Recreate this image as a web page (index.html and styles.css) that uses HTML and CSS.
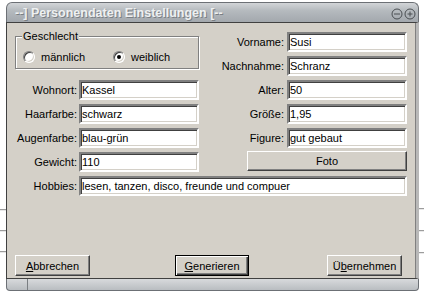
FILE: index.html
```html
<!DOCTYPE html>
<html>
	<head>
		<title>Personendaten Einstellungen</title>
		<link rel="stylesheet" href="styles.css">
	</head>
	<body>
		<div class="window">
			<div class="titlebar">
				<span class="title">--] Personendaten Einstellungen [--</span>
				<span class="tbtns">
					<svg width="12" height="12" viewBox="0 0 12 12"><circle cx="6" cy="6" r="5" fill="none" stroke="#4a4e52" stroke-width="1"/><path d="M3 6h6" stroke="#4a4e52" stroke-width="1"/></svg>
					<svg width="12" height="12" viewBox="0 0 12 12"><circle cx="6" cy="6" r="5" fill="none" stroke="#4a4e52" stroke-width="1"/><path d="M3.5 6h5M6 3.5v5" stroke="#4a4e52" stroke-width="1"/></svg>
				</span>
			</div>
			<div class="panel">
				<div class="form">
					<div class="group">
						<span class="legend">Geschlecht</span>
						<span class="radio"><span class="dot"></span>männlich</span>
						<span class="radio female"><span class="dot checked"></span>weiblich</span>
					</div>

					<span class="lbl right row1">Vorname:</span><span class="field right row1">Susi</span>
					<span class="lbl right row2">Nachnahme:</span><span class="field right row2">Schranz</span>

					<span class="lbl left row3">Wohnort:</span><span class="field left row3">Kassel</span>
					<span class="lbl right row3">Alter:</span><span class="field right row3">50</span>

					<span class="lbl left row4">Haarfarbe:</span><span class="field left row4">schwarz</span>
					<span class="lbl right row4">Größe:</span><span class="field right row4">1,95</span>

					<span class="lbl left row5">Augenfarbe:</span><span class="field left row5">blau-grün</span>
					<span class="lbl right row5">Figure:</span><span class="field right row5">gut gebaut</span>

					<span class="lbl left row6">Gewicht:</span><span class="field left row6">110</span>
					<button class="btn foto row6">Foto</button>

					<span class="lbl left row7">Hobbies:</span><span class="field wide row7">lesen, tanzen, disco, freunde und compuer</span>
				</div>
				<div class="buttons">
					<button class="btn action"><u>A</u>bbrechen</button>
					<button class="btn action default generate"><u>G</u>enerieren</button>
					<button class="btn action apply">Ü<u>b</u>ernehmen</button>
				</div>
			</div>
			<div class="statusbar"><span class="cell"></span></div>
		</div>
	</body>
</html>
```

FILE: styles.css
```css
:root {
	--face: #d4d0c8;
	--shadow: #808080;
	--dark: #404040;
}
* {font-family: "Liberation Sans", Arial, sans-serif; font-size: 11px; box-sizing: border-box;}
body {
	margin: 0;
	width: 424px;
	height: 294px;
	overflow: hidden;
	background:
		linear-gradient(#9c9c9c, #9c9c9c) 0 209px / 6px 1px no-repeat,
		linear-gradient(#e8e8e8, #e8e8e8) 0 210px / 6px 1px no-repeat,
		linear-gradient(#9c9c9c, #9c9c9c) 0 230px / 6px 1px no-repeat,
		linear-gradient(#e8e8e8, #e8e8e8) 0 231px / 6px 1px no-repeat,
		linear-gradient(#9c9c9c, #9c9c9c) 0 251px / 6px 1px no-repeat,
		linear-gradient(#e8e8e8, #e8e8e8) 0 252px / 6px 1px no-repeat,
		linear-gradient(#9c9c9c, #9c9c9c) 419px 208px / 5px 1px no-repeat,
		linear-gradient(#e8e8e8, #e8e8e8) 419px 209px / 5px 1px no-repeat,
		linear-gradient(#9c9c9c, #9c9c9c) 419px 230px / 5px 1px no-repeat,
		linear-gradient(#e8e8e8, #e8e8e8) 419px 231px / 5px 1px no-repeat,
		linear-gradient(#9c9c9c, #9c9c9c) 419px 252px / 5px 1px no-repeat,
		linear-gradient(#e8e8e8, #e8e8e8) 419px 253px / 5px 1px no-repeat,
		#fff;
}
.window {
	margin: 2px 0 0 6px;
	width: 413px;
	display: flex;
	flex-direction: column;
}
.titlebar {
	height: 20px;
	display: flex;
	align-items: center;
	justify-content: space-between;
	padding: 0 2px 0 8px;
	border: 1px solid #6c7075;
	border-bottom: none;
	border-radius: 6px 6px 0 0;
	background: linear-gradient(#d2d5d8, #b5babe 40%, #a3a8ad);
}
.title {
	font-size: 12.5px;
	font-weight: bold;
	color: #eef0f1;
	text-shadow: 1px 1px 0 #7a7f84;
}
.tbtns {display: flex; gap: 1px; padding-top: 2px;}

.panel {
	height: 257px;
	background: var(--face);
	border: 1px solid var(--dark);
	border-right: 3px solid #b8b8b8;
	box-shadow: inset -1px 0 var(--shadow);
	display: flex;
	flex-direction: column;
	justify-content: space-between;
}
.form {
	display: grid;
	grid-template-columns: 64px 120px 88px 120px;
	grid-template-rows: repeat(7, 20px);
	row-gap: 4px;
	padding: 9px 0 0 8px;
}
.row1 {grid-row: 1;}
.row2 {grid-row: 2;}
.row3 {grid-row: 3;}
.row4 {grid-row: 4;}
.row5 {grid-row: 5;}
.row6 {grid-row: 6;}
.row7 {grid-row: 7;}
.lbl {
	display: flex;
	align-items: center;
	justify-content: flex-end;
	color: #000;
	white-space: nowrap;
}
.lbl.left {grid-column: 1; padding-right: 2px;}
.lbl.right {grid-column: 3; padding-right: 3px;}
.field {
	display: flex;
	align-items: center;
	background: #fff;
	color: #000;
	padding-left: 1px;
	border: 2px solid;
	border-color: var(--shadow) #fff #fff var(--shadow);
	box-shadow: inset 1px 1px var(--dark), inset -1px -1px var(--face);
	white-space: nowrap;
}
.field.left {grid-column: 2;}
.field.right {grid-column: 4;}
.field.wide {grid-column: 2 / 5;}

.group {
	grid-column: 1 / 3;
	grid-row: 1 / 3;
	margin-top: 4px;
	height: 33px;
	position: relative;
	border: 1px solid var(--shadow);
	box-shadow: inset 1px 1px #fff, 1px 1px #fff;
	display: flex;
	align-items: center;
	padding: 9px 0 0 7px;
}
.legend {
	position: absolute;
	top: -7px;
	left: 6px;
	padding: 0 1px;
	background: var(--face);
	color: #000;
}
.radio {display: flex; align-items: center; color: #000;}
.radio.female {margin-left: 28px;}
.dot {
	width: 12px;
	height: 12px;
	margin-right: 6px;
	border-radius: 50%;
	background: #fff;
	border: 1px solid;
	border-color: var(--shadow) #fff #fff var(--shadow);
	box-shadow: inset 1px 1px var(--dark), inset -1px -1px var(--face);
	position: relative;
}
.dot.checked::after {
	content: "";
	position: absolute;
	left: 3px;
	top: 3px;
	width: 4px;
	height: 4px;
	border-radius: 50%;
	background: #000;
}

.btn {
	margin: 0;
	padding: 0;
	height: 20px;
	background: var(--face);
	color: #000;
	border: 1px solid;
	border-color: #fff var(--dark) var(--dark) #fff;
	box-shadow: inset -1px -1px var(--shadow);
}
.btn u {text-decoration: underline; text-underline-offset: 1px;}
.foto {
	grid-column: 3 / 5;
	justify-self: end;
	width: 160px;
	margin-top: -1px;
}
.buttons {
	display: flex;
	padding: 0 0 2px 8px;
}
.action {width: 75px; height: 21px;}
.generate {margin-left: 85px; width: 74px;}
.apply {margin-left: 78px;}
.default {
	border-color: #000;
	box-shadow: inset 1px 1px #fff, inset -1px -1px var(--dark), inset -2px -2px var(--shadow);
}
.statusbar {
	height: 12px;
	display: flex;
	border: 1px solid #6c7075;
	border-top: none;
	border-radius: 0 0 4px 4px;
	background: linear-gradient(#d8dadc, #b9bdc1);
}
.cell {width: 21px; border-right: 1px solid #7a7e82;}
```
